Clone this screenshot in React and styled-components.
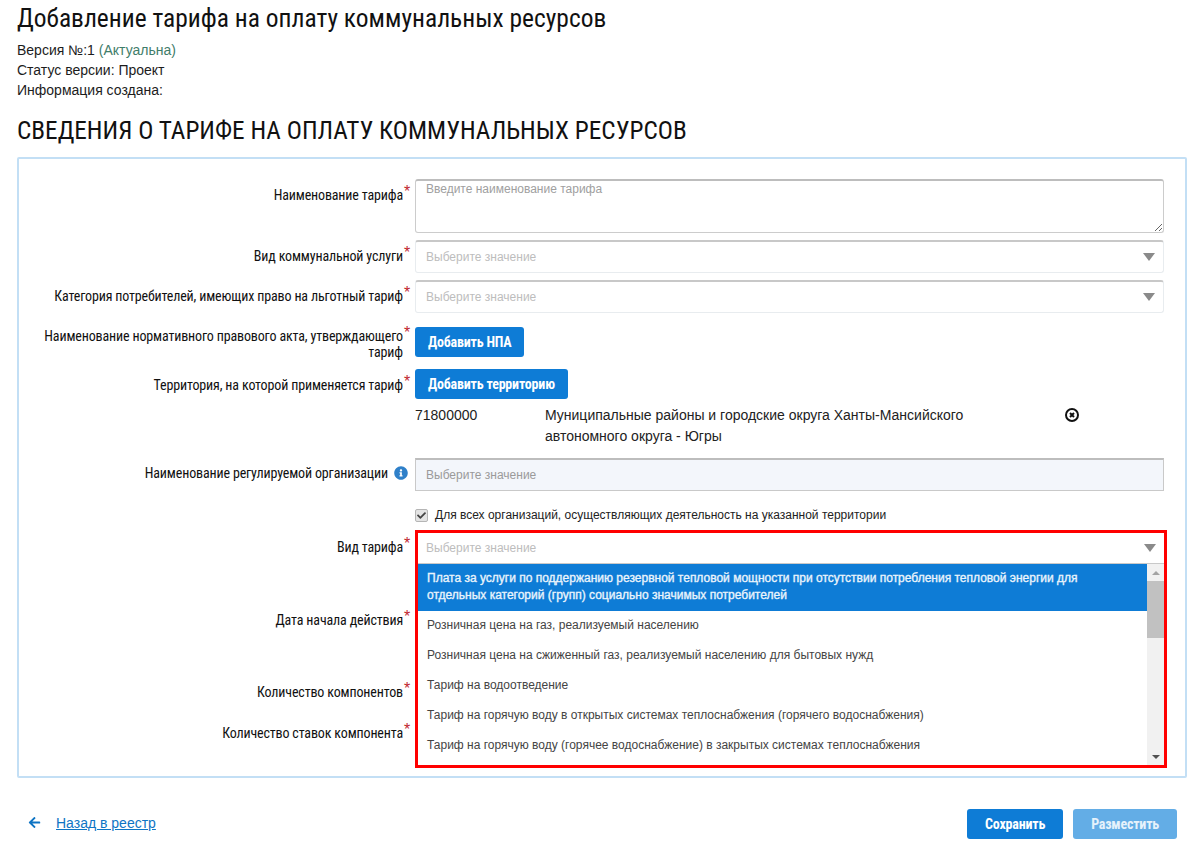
import React from 'react'
import styled, { createGlobalStyle } from 'styled-components'
import { FaArrowLeft, FaCheck, FaInfoCircle } from 'react-icons/fa'

const narrow = '"Liberation Sans Narrow", "Roboto Condensed", Roboto, sans-serif'

const GlobalStyle = createGlobalStyle`
  html, body {
    margin: 0;
    padding: 0;
    background: #fff;
    font-family: "Liberation Sans", Arial, sans-serif;
    color: #1c1c1c;
  }
`

const Page = styled.div`
  width: 1202px;
  height: 853px;
  padding: 0 15px 0 17px;
  box-sizing: border-box;
  overflow: hidden;
`

const Title = styled.h1`
  margin: 0;
  padding-top: 4px;
  font: 400 25.45px/28px ${narrow};
  color: #111;
`

const Meta = styled.div`
  margin-top: 8px;
  font-size: 14px;
  line-height: 20px;
`

const Current = styled.span`
  color: #3f7d6a;
`

const SectionTitle = styled.h2`
  margin: 17px 0 0;
  font: 400 25.25px/28px ${narrow};
  color: #111;
`

const Panel = styled.section`
  margin-top: 12px;
  height: 621px;
  box-sizing: border-box;
  border: 2px solid #c3dff5;
  border-radius: 2px;
  padding-top: 20px;
  position: relative;
`

const Row = styled.div`
  display: grid;
  grid-template-columns: 396px 749px;
  margin-bottom: ${p => p.$gap ?? 7}px;
  min-height: ${p => p.$height ?? 0}px;
`

const Label = styled.label`
  position: relative;
  padding: ${p => p.$top ?? 8}px ${p => p.$right ?? 12}px 0 0;
  text-align: right;
  font: 400 14px/16px ${narrow};
  letter-spacing: -0.15px;
  color: #111;
`

const Star = styled.span`
  position: absolute;
  right: 5px;
  top: ${p => (p.$top ?? 8) - 3}px;
  font: 400 16px/16px "Liberation Sans", sans-serif;
  color: #c0272d;
`

const Hint = styled.span`
  position: absolute;
  right: 7px;
  top: 8px;
  width: 14px;
  height: 14px;
  color: #2f80c9;
  font-size: 14px;
  line-height: 0;
`

const Textarea = styled.textarea`
  display: block;
  width: 749px;
  height: 54px;
  box-sizing: border-box;
  padding: 1px 10px 0;
  border: 1px solid #ccc;
  border-top: 2px solid #bdbdbd;
  border-radius: 3px;
  font: 400 12px/14px "Liberation Sans", sans-serif;
  outline: none;
  &::placeholder {
    color: #a0a0a0;
  }
`

const Select = styled.div`
  display: flex;
  align-items: center;
  justify-content: space-between;
  width: 749px;
  height: 33px;
  box-sizing: border-box;
  padding: 0 8px 0 10px;
  border: 1px solid ${p => (p.$readonly ? '#c9c9c9' : '#e8ecef')};
  border-top: 2px solid ${p => (p.$readonly ? '#bdbdbd' : '#c8c8c8')};
  border-radius: ${p => (p.$readonly ? 0 : 3)}px;
  background: ${p => (p.$readonly ? '#f3f6fb' : '#fff')};
  font-size: 12px;
  color: ${p => (p.$readonly ? '#9a9a9a' : '#bdbdbd')};
`

const Caret = styled.span`
  width: 0;
  height: 0;
  border-left: 6px solid transparent;
  border-right: 6px solid transparent;
  border-top: 8px solid #8a8a8a;
`

const Button = styled.button`
  height: 30px;
  padding: 0 ${p => p.$pad ?? 13}px;
  border: 0;
  border-radius: 3px;
  background: ${p => (p.$muted ? '#63ade6' : '#0e7cd6')};
  color: ${p => (p.$muted ? '#e6f2fb' : '#fff')};
  font: 700 14px/30px ${narrow};
  letter-spacing: -0.2px;
  white-space: nowrap;
`

const Controls = styled.div`
  display: flex;
  align-items: flex-start;
`

const Territory = styled.div`
  display: grid;
  grid-template-columns: 130px 520px 1fr;
  font-size: 14px;
  line-height: 21px;
  color: #222;
`

const TerritoryName = styled.span`
  padding-right: 60px;
`

const Remove = styled.svg`
  display: block;
  width: 14px;
  height: 14px;
  margin-top: 3px;
`

const CheckRow = styled.div`
  display: flex;
  align-items: center;
  gap: 7px;
  height: 16px;
  font-size: 12px;
  color: #222;
`

const CheckBox = styled.span`
  display: flex;
  align-items: center;
  justify-content: center;
  width: 11px;
  height: 11px;
  border: 1px solid #b5b5b5;
  border-radius: 2px;
  background: #e4e4e4;
  color: #444;
  font-size: 9px;
`

const Highlight = styled.div`
  position: absolute;
  left: 396px;
  top: 371px;
  width: 752px;
  height: 238px;
  box-sizing: border-box;
  border: 3px solid #f00;
  background: #fff;
  display: flex;
  flex-direction: column;
`

const OpenField = styled.div`
  display: flex;
  align-items: center;
  justify-content: space-between;
  height: 31px;
  flex: none;
  box-sizing: border-box;
  padding: 0 8px 0 8px;
  border-bottom: 1px solid #c9c9c9;
  font-size: 12px;
  color: #bdbdbd;
`

const Dropdown = styled.div`
  display: flex;
  height: 201px;
  overflow: hidden;
`

const OptionList = styled.ul`
  list-style: none;
  margin: 0;
  padding: 0;
  flex: 1;
`

const Option = styled.li`
  padding: 6px 9px 7px;
  font-size: 12px;
  line-height: 17px;
  background: ${p => (p.$active ? '#0e7cd6' : '#fff')};
  color: ${p => (p.$active ? '#eaf4fc' : '#444')};
  -webkit-text-stroke: ${p => (p.$active ? '0.35px' : '0')};
`

const Scrollbar = styled.div`
  width: 17px;
  flex: none;
  background: #f1f1f1;
  display: flex;
  flex-direction: column;
  align-items: center;
`

const ArrowUp = styled.span`
  flex: none;
  margin: 7px 0 6px;
  width: 0;
  height: 0;
  border-left: 4px solid transparent;
  border-right: 4px solid transparent;
  border-bottom: 4px solid #a3a3a3;
`

const Thumb = styled.div`
  width: 100%;
  height: 57px;
  flex: none;
  background: #c1c1c1;
`

const ArrowDown = styled.span`
  flex: none;
  margin: auto 0 6px;
  width: 0;
  height: 0;
  border-left: 4px solid transparent;
  border-right: 4px solid transparent;
  border-top: 4px solid #505050;
`

const Footer = styled.footer`
  display: flex;
  align-items: center;
  margin-top: 31px;
  padding: 0 10px 0 12px;
`

const BackLink = styled.a`
  display: flex;
  align-items: center;
  gap: 15px;
  color: #0e74c4;
  font-size: 14px;
  margin: 0 auto 3px -1px;
  span {
    text-decoration: underline;
  }
  svg {
    font-size: 13px;
  }
`

const FooterActions = styled.div`
  display: flex;
  gap: 10px;
`

const options = [
  'Розничная цена на газ, реализуемый населению',
  'Розничная цена на сжиженный газ, реализуемый населению для бытовых нужд',
  'Тариф на водоотведение',
  'Тариф на горячую воду в открытых системах теплоснабжения (горячего водоснабжения)',
  'Тариф на горячую воду (горячее водоснабжение) в закрытых системах теплоснабжения',
]

function App() {
  return (
    <Page>
      <GlobalStyle />
      <Title>Добавление тарифа на оплату коммунальных ресурсов</Title>
      <Meta>
        <div>Версия №:1 <Current>(Актуальна)</Current></div>
        <div>Статус версии: Проект</div>
        <div>Информация создана:</div>
      </Meta>
      <SectionTitle>СВЕДЕНИЯ О ТАРИФЕ НА ОПЛАТУ КОММУНАЛЬНЫХ РЕСУРСОВ</SectionTitle>

      <Panel>
        <Row>
          <Label>Наименование тарифа<Star>*</Star></Label>
          <Textarea placeholder="Введите наименование тарифа" />
        </Row>
        <Row>
          <Label>Вид коммунальной услуги<Star>*</Star></Label>
          <Select>Выберите значение<Caret /></Select>
        </Row>
        <Row $gap={14}>
          <Label>Категория потребителей, имеющих право на льготный тариф<Star>*</Star></Label>
          <Select>Выберите значение<Caret /></Select>
        </Row>
        <Row $gap={9}>
          <Label $top={1}>Наименование нормативного правового акта, утверждающего тариф<Star $top={1}>*</Star></Label>
          <Controls><Button>Добавить НПА</Button></Controls>
        </Row>
        <Row $gap={6}>
          <Label>Территория, на которой применяется тариф<Star>*</Star></Label>
          <Controls><Button>Добавить территорию</Button></Controls>
        </Row>
        <Row $gap={11}>
          <span />
          <Territory>
            <span>71800000</span>
            <TerritoryName>Муниципальные районы и городские округа Ханты-Мансийского автономного округа - Югры</TerritoryName>
            <Remove viewBox="0 0 14 14" fill="none" stroke="#111">
              <circle cx="7" cy="7" r="6" strokeWidth="2" />
              <path d="M5 5l4 4M9 5l-4 4" strokeWidth="2" />
            </Remove>
          </Territory>
        </Row>
        <Row $gap={16}>
          <Label $top={7} $right={27}>
            Наименование регулируемой организации
            <Hint><FaInfoCircle /></Hint>
          </Label>
          <Select $readonly>Выберите значение</Select>
        </Row>
        <Row $height={25}>
          <span />
          <CheckRow>
            <CheckBox><FaCheck /></CheckBox>
            Для всех организаций, осуществляющих деятельность на указанной территории
          </CheckRow>
        </Row>
        <Row $height={58}>
          <Label $top={0}>Вид тарифа<Star $top={0}>*</Star></Label>
        </Row>
        <Row $height={65}>
          <Label>Дата начала действия<Star>*</Star></Label>
        </Row>
        <Row $height={34}>
          <Label>Количество компонентов<Star>*</Star></Label>
        </Row>
        <Row>
          <Label>Количество ставок компонента<Star>*</Star></Label>
        </Row>

        <Highlight>
          <OpenField>Выберите значение<Caret /></OpenField>
          <Dropdown>
            <OptionList>
              <Option $active>
                Плата за услуги по поддержанию резервной тепловой мощности при отсутствии потребления тепловой энергии для отдельных категорий (групп) социально значимых потребителей
              </Option>
              {options.map(o => <Option key={o}>{o}</Option>)}
            </OptionList>
            <Scrollbar>
              <ArrowUp />
              <Thumb />
              <ArrowDown />
            </Scrollbar>
          </Dropdown>
        </Highlight>
      </Panel>

      <Footer>
        <BackLink><FaArrowLeft /><span>Назад в реестр</span></BackLink>
        <FooterActions>
          <Button $pad={18}>Сохранить</Button>
          <Button $pad={18} $muted>Разместить</Button>
        </FooterActions>
      </Footer>
    </Page>
  )
}

export default App
